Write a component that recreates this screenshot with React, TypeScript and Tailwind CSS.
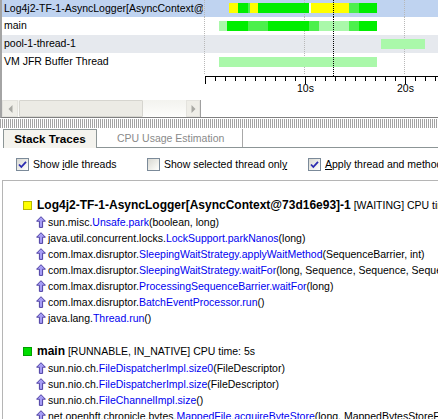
import React from "react";

const Y = "#ffff00";
const G = "#00ee00";
const M = "#4cf04c";
const L = "#aaf8aa";

type Seg = [number, number, string];
const rows: { name: string; bg: string; h: number; y: number; segs: Seg[] }[] = [
  {
    name: "Log4j2-TF-1-AsyncLogger[AsyncContext@73d16e93]-1",
    bg: "bg-[#bfd3f0]",
    h: 17,
    y: 3,
    segs: [
      [26, 35, Y],
      [35, 45, G],
      [45, 47, M],
      [47, 55, Y],
      [55, 106, G],
      [106, 108, "#f2fff2"],
      [108, 146, Y],
      [146, 156, M],
      [156, 174, G],
    ],
  },
  {
    name: "main",
    bg: "bg-white",
    h: 18,
    y: 4,
    segs: [
      [16, 24, L],
      [24, 45, G],
      [45, 65, M],
      [65, 106, G],
      [106, 116, M],
      [116, 146, L],
      [146, 156, M],
      [156, 174, G],
    ],
  },
  { name: "pool-1-thread-1", bg: "bg-[#e6e9ee]", h: 18, y: 4, segs: [[178, 222, L]] },
  { name: "VM JFR Buffer Thread", bg: "bg-white", h: 18, y: 4, segs: [[16, 174, L]] },
];

const GRID = [1.5, 101.5, 201.5];
const CURSOR = 130.5;

function RowBars({ h, y, segs }: { h: number; y: number; segs: Seg[] }) {
  return (
    <svg width="235" height={h} className="block">
      {GRID.map((x) => (
        <line key={x} x1={x} x2={x} y1={0} y2={h} stroke="#b8b8b8" strokeDasharray="1 1" />
      ))}
      {segs.map(([a, b, c], i) => (
        <rect key={i} x={a} y={y} width={b - a} height={10} fill={c} />
      ))}
      <line x1={CURSOR} x2={CURSOR} y1={0} y2={h} stroke="#000" strokeDasharray="1 1" />
    </svg>
  );
}

function Axis() {
  const ticks = [];
  for (let k = 0; k < 24; k++) {
    const x = 2.5 + k * 10;
    ticks.push(
      <line key={k} x1={x} x2={x} y1={5} y2={k % 10 === 0 ? 13 : 10} stroke="#000" />
    );
  }
  return (
    <svg width="235" height="46" className="block">
      {GRID.map((x) => (
        <line key={x} x1={x} x2={x} y1={0} y2={4} stroke="#b8b8b8" strokeDasharray="1 1" />
      ))}
      <line x1={CURSOR} x2={CURSOR} y1={0} y2={5} stroke="#000" strokeDasharray="1 1" />
      <line x1={2} x2={235} y1={5.5} y2={5.5} stroke="#000" />
      {ticks}
      <text x={102.5} y={21} textAnchor="middle" fontSize="10.5" fontFamily="'Liberation Sans', Arial, sans-serif" fill="#000">
        10s
      </text>
      <text x={202.5} y={21} textAnchor="middle" fontSize="10.5" fontFamily="'Liberation Sans', Arial, sans-serif" fill="#000">
        20s
      </text>
    </svg>
  );
}

function Checkbox({ checked }: { checked: boolean }) {
  return (
    <span className="flex h-[13px] w-[13px] shrink-0 items-center justify-center border border-[#7b8a99] bg-[linear-gradient(135deg,#d8d8d2_0%,#f4f4f0_70%,#ffffff_100%)]">
      {checked && (
        <svg width="9" height="9" viewBox="0 0 9 9">
          <polyline points="1,4.5 3.3,7 8,1.8" fill="none" stroke="#2b2bb0" strokeWidth="1.8" />
        </svg>
      )}
    </span>
  );
}

function UpArrow() {
  return (
    <svg width="10" height="12" viewBox="0 0 10 12" className="block shrink-0">
      <path d="M5 0.7 L9.4 5.2 L6.6 5.2 L6.6 11.4 L3.4 11.4 L3.4 5.2 L0.6 5.2 Z" fill="#a69df5" stroke="#4d3fa3" strokeWidth="1" strokeLinejoin="round" />
    </svg>
  );
}

type Frame = [string, string, string];

function FrameRow({ f }: { f: Frame }) {
  return (
    <div className="flex h-[16px] items-center gap-[2px] whitespace-nowrap pl-[33px]">
      <UpArrow />
      <span>
        {f[0]}
        <span className="text-[#0000f0]">{f[1]}</span>
        {f[2]}
      </span>
    </div>
  );
}

function Header({ color, border, name, rest }: { color: string; border: string; name: string; rest: string }) {
  return (
    <div className="flex h-[18px] items-center gap-[5px] whitespace-nowrap pl-[20px]">
      <span className={`h-[9px] w-[9px] shrink-0 border ${color} ${border}`} />
      <span>
        <span className="text-[12px] font-bold">{name}</span>
        {rest}
      </span>
    </div>
  );
}

const frames1: Frame[] = [
  ["sun.misc.", "Unsafe.park", "(boolean, long)"],
  ["java.util.concurrent.locks.", "LockSupport.parkNanos", "(long)"],
  ["com.lmax.disruptor.", "SleepingWaitStrategy.applyWaitMethod", "(SequenceBarrier, int)"],
  ["com.lmax.disruptor.", "SleepingWaitStrategy.waitFor", "(long, Sequence, Sequence, SequenceBarrier)"],
  ["com.lmax.disruptor.", "ProcessingSequenceBarrier.waitFor", "(long)"],
  ["com.lmax.disruptor.", "BatchEventProcessor.run", "()"],
  ["java.lang.", "Thread.run", "()"],
];

const frames2: Frame[] = [
  ["sun.nio.ch.", "FileDispatcherImpl.size0", "(FileDescriptor)"],
  ["sun.nio.ch.", "FileDispatcherImpl.size", "(FileDescriptor)"],
  ["sun.nio.ch.", "FileChannelImpl.size", "()"],
  ["net.openhft.chronicle.bytes.", "MappedFile.acquireByteStore", "(long, MappedBytesStoreFactory)"],
];

export default function App() {
  return (
    <div className="relative h-[419px] w-[438px] overflow-hidden bg-white text-[10.5px] leading-[12px] text-black [font-family:'Liberation_Sans',Arial,sans-serif]">
      {/* top timeline pane */}
      <div className="flex h-[118px] flex-col border-b border-l-2 border-b-[#808080] border-l-[#a4a4a4]">
        <div className="flex flex-col">
          {rows.map((r) => (
            <div key={r.name} className={`flex ${r.bg}`} style={{ height: r.h }}>
              <div className="w-[201px] shrink-0 overflow-hidden whitespace-nowrap pl-[2px] leading-[17px]">
                {r.name}
              </div>
              <div className="flex-1 overflow-hidden">
                <RowBars h={r.h} y={r.y} segs={r.segs} />
              </div>
            </div>
          ))}
        </div>
        <div className="flex flex-1">
          <div className="flex w-[201px] shrink-0 flex-col justify-end">
            <div className="flex h-[17px] w-[199px] border-r border-[#a0a0a0] bg-[linear-gradient(180deg,#f3f3ef,#fdfdfb)]">
              <div className="flex h-full w-[16px] items-center justify-center border border-[#e4e3de] bg-[#efeee8]">
                <svg width="5" height="8" viewBox="0 0 5 8">
                  <path d="M4.5 0 L0.5 4 L4.5 8 Z" fill="#a9a9a4" />
                </svg>
              </div>
              <div className="ml-[1px] h-full w-[124px] rounded-[1px] border border-[#d6d5cf] bg-[#ecebe5]" />
              <div className="flex-1" />
              <div className="flex h-full w-[14px] items-center justify-center border border-[#e4e3de] bg-[#efeee8]">
                <svg width="5" height="8" viewBox="0 0 5 8">
                  <path d="M0.5 0 L4.5 4 L0.5 8 Z" fill="#a9a9a4" />
                </svg>
              </div>
            </div>
          </div>
          <div className="flex-1 overflow-hidden">
            <Axis />
          </div>
        </div>
      </div>

      {/* splitter */}
      <div className="mt-[1px] h-[9px] bg-[repeating-linear-gradient(90deg,#a3a3a3_0px,#a3a3a3_1px,#ffffff_1px,#ffffff_2px)]" />

      {/* tabs */}
      <div className="flex h-[20px] items-end pl-[3px]">
        <div className="flex h-[19px] w-[94px] items-center justify-center border-l border-r border-t border-[#8c9596] bg-[#f4f3ee] text-[11.7px] font-bold">
          Stack Traces
        </div>
        <div className="flex h-[19px] flex-1 items-end border-b border-[#8c9596]">
          <div className="flex h-[18px] items-center border-r border-[#a8a8a8] pl-[20px] pr-[18px] text-[#8a8a8a]">
            <span className="-mt-[1px]">CPU Usage Estimation</span>
          </div>
        </div>
      </div>

      {/* options */}
      <div className="flex h-[32px] items-center whitespace-nowrap pl-[16px]">
        <div className="flex w-[131px] shrink-0 items-center gap-[4px]">
          <Checkbox checked />
          <span>
            Show <span className="underline">i</span>dle threads
          </span>
        </div>
        <div className="flex w-[161px] shrink-0 items-center gap-[4px]">
          <Checkbox checked={false} />
          <span>
            Show selected thread onl<span className="underline">y</span>
          </span>
        </div>
        <div className="flex shrink-0 items-center gap-[4px]">
          <Checkbox checked />
          <span>
            <span className="underline">A</span>pply thread and method filters
          </span>
        </div>
      </div>

      {/* stack traces content */}
      <div className="ml-[2px] h-[240px] overflow-hidden border-l border-t border-[#b5b5b5] pt-[15px]">
        <Header
          color="bg-[#ffff00]"
          border="border-[#b8b800]"
          name="Log4j2-TF-1-AsyncLogger[AsyncContext@73d16e93]-1"
          rest=" [WAITING] CPU time: 0s"
        />
        {frames1.map((f, i) => (
          <FrameRow key={i} f={f} />
        ))}
        <div className="h-[16px]" />
        <Header color="bg-[#00dd00]" border="border-[#00a000]" name="main" rest=" [RUNNABLE, IN_NATIVE] CPU time: 5s" />
        {frames2.map((f, i) => (
          <FrameRow key={i} f={f} />
        ))}
      </div>
    </div>
  );
}
